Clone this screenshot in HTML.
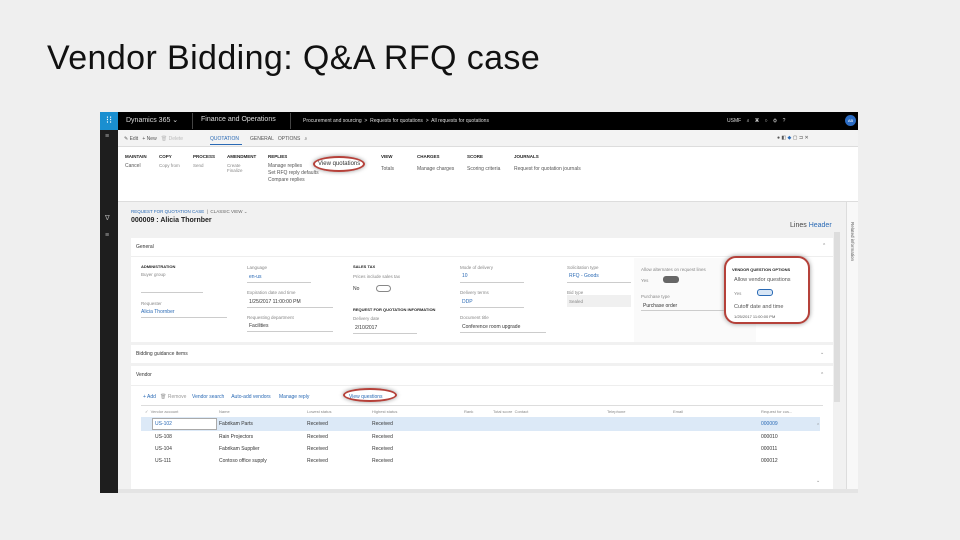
<!DOCTYPE html>
<html><head><meta charset="utf-8"><style>
*{margin:0;padding:0;box-sizing:border-box}
body{width:960px;height:540px;background:#efefef;font-family:"Liberation Sans",sans-serif;position:relative;overflow:hidden}
.a{position:absolute;white-space:nowrap}
.t{font-size:5px;color:#555}
.l{font-size:4.5px;color:#888}
.b{font-size:4.5px;color:#222;font-weight:bold}
.v{font-size:5px;color:#333}
.bl{color:#2a6ab5}
.line{position:absolute;height:1px;background:#bbb}
.oval{position:absolute;border:2px solid #b5413a;border-radius:50%;box-shadow:0 0 4px #999}
</style></head><body>
<div class="a" style="left:47px;top:39px;font-size:34px;letter-spacing:0.4px;color:#111">Vendor Bidding: Q&amp;A RFQ case</div>

<div class="a" style="left:100px;top:112px;width:758px;height:381px;background:#f1f1f1"></div>
<!-- top bar -->
<div class="a" style="left:100px;top:112px;width:758px;height:18px;background:#000"></div>
<div class="a" style="left:100px;top:112px;width:18px;height:18px;background:#1a8fd0;color:#fff;font-size:10px;text-align:center;line-height:18px">⁝⁝</div>
<div class="a" style="left:126px;top:116px;font-size:7px;color:#ddd">Dynamics 365 ⌄</div>
<div class="a" style="left:192px;top:113px;width:1px;height:16px;background:#444"></div>
<div class="a" style="left:201px;top:116px;font-size:7px;color:#ddd">Finance and Operations</div>
<div class="a" style="left:290px;top:113px;width:1px;height:16px;background:#444"></div>
<div class="a" style="left:303px;top:118px;font-size:5px;color:#ddd">Procurement and sourcing &nbsp;&gt;&nbsp; Requests for quotations &nbsp;&gt;&nbsp; All requests for quotations</div>
<div class="a" style="left:727px;top:118px;font-size:5px;color:#ddd">USMF &nbsp;&nbsp;&nbsp;⌕ &nbsp;&nbsp;&nbsp;▣ &nbsp;&nbsp;&nbsp;○ &nbsp;&nbsp;&nbsp;⚙ &nbsp;&nbsp;&nbsp;?</div>
<div class="a" style="left:845px;top:115px;width:11px;height:11px;border-radius:50%;background:#2b6cc4;color:#fff;font-size:4px;text-align:center;line-height:11px">AB</div>
<!-- left nav -->
<div class="a" style="left:100px;top:130px;width:18px;height:363px;background:#1e1e1e"></div>
<div class="a" style="left:105px;top:133px;font-size:7px;color:#aaa">≡</div>
<div class="a" style="left:105px;top:214px;font-size:7px;color:#aaa">∇</div>
<div class="a" style="left:105px;top:232px;font-size:7px;color:#aaa">≡</div>
<!-- command bar -->
<div class="a" style="left:118px;top:130px;width:740px;height:17px;background:#f3f3f3;border-bottom:1px solid #ddd"></div>
<div class="a t" style="left:124px;top:136px">✎ Edit &nbsp;&nbsp;+ New &nbsp;&nbsp;<span style="color:#bbb">🗑 Delete</span></div>
<div class="a" style="left:210px;top:136px;font-size:5px;color:#2a6ab5">QUOTATION</div>
<div class="a" style="left:210px;top:144px;width:32px;height:1px;background:#2a6ab5"></div>
<div class="a t" style="left:250px;top:136px">GENERAL &nbsp;&nbsp;OPTIONS &nbsp;&nbsp;⌕</div>
<div class="a t" style="left:777px;top:135px">● ◧ <span style="color:#2a6ab5">◆</span> ▢ ⊐ ✕</div>
<!-- action pane -->
<div class="a" style="left:118px;top:147px;width:740px;height:55px;background:#fff;border-bottom:1px solid #ddd"></div>
<div class="a b" style="left:125px;top:154px">MAINTAIN</div><div class="a t" style="left:125px;top:163px">Cancel</div>
<div class="a b" style="left:159px;top:154px">COPY</div><div class="a l" style="left:159px;top:163px">Copy from</div>
<div class="a b" style="left:193px;top:154px">PROCESS</div><div class="a l" style="left:193px;top:163px">Send</div>
<div class="a b" style="left:227px;top:154px">AMENDMENT</div><div class="a l" style="left:227px;top:163px">Create<br>Finalize</div>
<div class="a b" style="left:268px;top:154px">REPLIES</div><div class="a t" style="left:268px;top:163px;line-height:7px">Manage replies<br>Set RFQ reply defaults<br>Compare replies</div>
<div class="a" style="left:318px;top:161px;font-size:6px;color:#333">View quotations</div>
<div class="oval" style="left:313px;top:156px;width:52px;height:16px"></div>
<div class="a b" style="left:381px;top:154px">VIEW</div><div class="a t" style="left:381px;top:166px">Totals</div>
<div class="a b" style="left:417px;top:154px">CHARGES</div><div class="a t" style="left:417px;top:166px">Manage charges</div>
<div class="a b" style="left:467px;top:154px">SCORE</div><div class="a t" style="left:467px;top:166px">Scoring criteria</div>
<div class="a b" style="left:514px;top:154px">JOURNALS</div><div class="a t" style="left:514px;top:166px">Request for quotation journals</div>
<!-- header -->
<div class="a" style="left:131px;top:209px;font-size:4.5px;color:#2a6ab5">REQUEST FOR QUOTATION CASE &nbsp;<span style="color:#666">| &nbsp;CLASSIC VIEW ⌄</span></div>
<div class="a" style="left:131px;top:217px;font-size:7px;font-weight:bold;color:#222">000009 : Alicia Thornber</div>
<div class="a" style="left:790px;top:222px;font-size:7px;color:#444">Lines <span style="color:#2a6ab5">Header</span></div>
<!-- right pane -->
<div class="a" style="left:846px;top:202px;width:12px;height:291px;background:#f8f8f8;border-left:1px solid #ddd"></div>
<div class="a" style="left:850px;top:222px;font-size:4.5px;color:#555;writing-mode:vertical-rl">Related information</div>
<div class="a" style="left:834px;top:232px;width:6px;height:170px;background:#ddd"></div>
<!-- General card -->
<div class="a" style="left:131px;top:238px;width:702px;height:104px;background:#fff"></div>
<div class="a t" style="left:136px;top:244px;color:#333">General</div>
<div class="line" style="left:131px;top:256px;width:702px;background:#eee"></div>
<div class="a" style="left:822px;top:243px;font-size:5px;color:#666">⌃</div>
<div class="a b" style="left:141px;top:264px;font-size:4px">ADMINISTRATION</div>
<div class="a l" style="left:141px;top:272px">Buyer group</div><div class="line" style="left:141px;top:292px;width:62px;background:#ccc"></div>
<div class="a l" style="left:141px;top:301px">Requester</div><div class="a" style="left:141px;top:309px;font-size:5px;color:#2a6ab5">Alicia Thornber</div><div class="line" style="left:141px;top:317px;width:86px;background:#ccc"></div>
<div class="a l" style="left:247px;top:265px">Language</div><div class="a v bl" style="left:249px;top:274px">en-us</div><div class="line" style="left:247px;top:282px;width:64px;background:#ccc"></div>
<div class="a l" style="left:247px;top:290px">Expiration date and time</div><div class="a v" style="left:249px;top:299px">1/25/2017 11:00:00 PM</div><div class="line" style="left:247px;top:307px;width:86px;background:#ccc"></div>
<div class="a l" style="left:247px;top:315px">Requesting department</div><div class="a v" style="left:249px;top:323px">Facilities</div><div class="line" style="left:247px;top:331px;width:86px;background:#ccc"></div>
<div class="a b" style="left:353px;top:264px;font-size:4px">SALES TAX</div>
<div class="a l" style="left:353px;top:274px">Prices include sales tax</div>
<div class="a v" style="left:353px;top:286px">No</div><div class="a" style="left:376px;top:285px;width:15px;height:7px;border:1px solid #888;border-radius:4px"></div>
<div class="a b" style="left:353px;top:307px;font-size:4px">REQUEST FOR QUOTATION INFORMATION</div>
<div class="a l" style="left:353px;top:316px">Delivery date</div><div class="a v" style="left:355px;top:325px">2/10/2017</div><div class="line" style="left:353px;top:333px;width:64px;background:#ccc"></div>
<div class="a l" style="left:460px;top:265px">Mode of delivery</div><div class="a v bl" style="left:462px;top:273px">10</div><div class="line" style="left:460px;top:282px;width:64px;background:#ccc"></div>
<div class="a l" style="left:460px;top:290px">Delivery terms</div><div class="a v bl" style="left:462px;top:299px">DDP</div><div class="line" style="left:460px;top:307px;width:64px;background:#ccc"></div>
<div class="a l" style="left:460px;top:315px">Document title</div><div class="a v" style="left:462px;top:324px">Conference room upgrade</div><div class="line" style="left:460px;top:332px;width:86px;background:#ccc"></div>
<div class="a l" style="left:567px;top:265px">Solicitation type</div><div class="a v bl" style="left:569px;top:273px">RFQ - Goods</div><div class="line" style="left:567px;top:282px;width:64px;background:#ccc"></div>
<div class="a l" style="left:567px;top:290px">Bid type</div><div class="a" style="left:567px;top:295px;width:64px;height:12px;background:#f0f0f0"></div><div class="a l" style="left:569px;top:299px">Sealed</div>
<div class="a" style="left:634px;top:258px;width:122px;height:84px;background:#fafafa"></div>
<div class="a l" style="left:641px;top:267px">Allow alternates on request lines</div>
<div class="a l" style="left:641px;top:278px">Yes</div><div class="a" style="left:663px;top:276px;width:16px;height:7px;background:#666;border-radius:3px"></div>
<div class="a l" style="left:641px;top:294px">Purchase type</div><div class="a v" style="left:643px;top:303px">Purchase order</div><div class="line" style="left:641px;top:310px;width:86px;background:#ccc"></div>
<!-- vendor question options -->
<div class="a" style="left:724px;top:256px;width:86px;height:68px;background:#fff;border:2px solid #b5413a;border-radius:12px;box-shadow:0 0 5px #999"></div>
<div class="a b" style="left:732px;top:267px;font-size:4px">VENDOR QUESTION OPTIONS</div>
<div class="a" style="left:734px;top:277px;font-size:5.5px;color:#555">Allow vendor questions</div>
<div class="a l" style="left:734px;top:291px">Yes</div><div class="a" style="left:757px;top:289px;width:16px;height:7px;background:#d8e6f5;border:1px solid #2a6ab5;border-radius:3px"></div>
<div class="a" style="left:734px;top:304px;font-size:5.5px;color:#555">Cutoff date and time</div>
<div class="a" style="left:734px;top:314px;font-size:4px;color:#555">1/25/2017 11:00:00 PM</div>
<!-- bidding guidance -->
<div class="a" style="left:131px;top:345px;width:702px;height:18px;background:#fff"></div>
<div class="a" style="left:136px;top:351px;font-size:5px;color:#333">Bidding guidance items</div>
<div class="a" style="left:820px;top:350px;font-size:5px;color:#888">⌄</div>
<!-- vendor -->
<div class="a" style="left:131px;top:366px;width:702px;height:124px;background:#fff"></div>
<div class="a" style="left:136px;top:372px;font-size:5px;color:#333">Vendor</div>
<div class="line" style="left:131px;top:385px;width:702px;background:#eee"></div>
<div class="a" style="left:820px;top:372px;font-size:5px;color:#666">⌃</div>
<div class="a" style="left:143px;top:394px;font-size:5px;color:#2a6ab5">+ Add &nbsp;&nbsp;<span style="color:#999">🗑 Remove</span> &nbsp;&nbsp;&nbsp;Vendor search &nbsp;&nbsp;&nbsp;&nbsp;Auto-add vendors &nbsp;&nbsp;&nbsp;&nbsp;&nbsp;Manage reply</div>
<div class="a" style="left:349px;top:394px;font-size:5px;color:#2a6ab5">View questions</div>
<div class="oval" style="left:343px;top:388px;width:54px;height:14px"></div>
<div class="line" style="left:141px;top:405px;width:682px;background:#ddd"></div>
<div class="a l" style="left:145px;top:409px;font-size:4px">✓ &nbsp;Vendor account</div>
<div class="a l" style="left:219px;top:409px;font-size:4px">Name</div>
<div class="a l" style="left:307px;top:409px;font-size:4px">Lowest status</div>
<div class="a l" style="left:372px;top:409px;font-size:4px">Highest status</div>
<div class="a l" style="left:464px;top:409px;font-size:4px">Rank</div>
<div class="a l" style="left:493px;top:409px;font-size:4px">Total score &nbsp;Contact</div>
<div class="a l" style="left:607px;top:409px;font-size:4px">Telephone</div>
<div class="a l" style="left:673px;top:409px;font-size:4px">Email</div>
<div class="a l" style="left:761px;top:409px;font-size:4px">Request for cus...</div>
<div class="a" style="left:141px;top:417px;width:679px;height:14px;background:#dce9f7"></div>
<div class="a" style="left:152px;top:418px;width:65px;height:12px;background:#fff;border:1px solid #aaa"></div>
<div class="a v" style="left:155px;top:421px;color:#2a6ab5">US-102</div><div class="a v" style="left:219px;top:421px">Fabrikam Parts</div><div class="a v" style="left:307px;top:421px">Received</div><div class="a v" style="left:372px;top:421px">Received</div><div class="a v bl" style="left:761px;top:421px">000009</div>
<div class="a v" style="left:155px;top:434px">US-108</div><div class="a v" style="left:219px;top:434px">Rain Projectors</div><div class="a v" style="left:307px;top:434px">Received</div><div class="a v" style="left:372px;top:434px">Received</div><div class="a v" style="left:761px;top:434px">000010</div>
<div class="a v" style="left:155px;top:446px">US-104</div><div class="a v" style="left:219px;top:446px">Fabrikam Supplier</div><div class="a v" style="left:307px;top:446px">Received</div><div class="a v" style="left:372px;top:446px">Received</div><div class="a v" style="left:761px;top:446px">000011</div>
<div class="a v" style="left:155px;top:458px">US-111</div><div class="a v" style="left:219px;top:458px">Contoso office supply</div><div class="a v" style="left:307px;top:458px">Received</div><div class="a v" style="left:372px;top:458px">Received</div><div class="a v" style="left:761px;top:458px">000012</div>
<div class="a" style="left:816px;top:423px;font-size:5px;color:#888">⌃</div>
<div class="a" style="left:816px;top:478px;font-size:5px;color:#888">⌄</div>
<div class="a" style="left:118px;top:489px;width:740px;height:4px;background:#e4e4e4"></div>
</body></html>
